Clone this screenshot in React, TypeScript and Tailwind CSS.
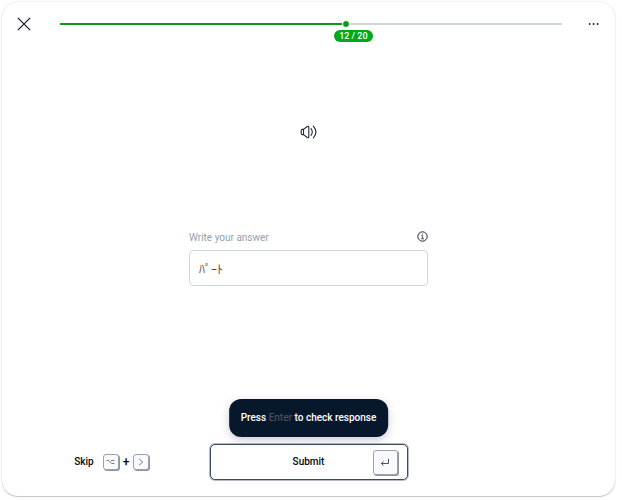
import React, { useState } from "react";

const progress = { current: 12, total: 20, percent: 57 };

function CloseIcon() {
    return (
        <svg viewBox="0 0 14 14" className="w-[14px] h-[14px]" fill="none" stroke="#111827" strokeWidth="1.2">
            <path d="M0.8 0.8 L13.2 13.2 M13.2 0.8 L0.8 13.2" />
        </svg>
    );
}

function MoreIcon() {
    return (
        <svg viewBox="0 0 12 4" className="w-[12px] h-[4px]" fill="#1f2937">
            <circle cx="1.6" cy="2" r="1" />
            <circle cx="5.6" cy="2" r="1" />
            <circle cx="9.6" cy="2" r="1" />
        </svg>
    );
}

function SpeakerIcon() {
    return (
        <svg viewBox="0 0 18 14" className="w-[18px] h-[14px]" fill="none" stroke="#1f2937" strokeWidth="1.1" strokeLinejoin="round" strokeLinecap="round">
            <path d="M3.5 4.4 H2.3 Q1.2 4.4 1.2 5.5 V8.5 Q1.2 9.6 2.3 9.6 H3.5 Z" />
            <path d="M3.5 4.4 L7.3 1.5 Q8.8 0.7 8.8 2.3 V11.7 Q8.8 13.3 7.3 12.5 L3.5 9.6" />
            <path d="M11 3.6 Q13.6 7 11 10.4" />
            <path d="M13.3 1.2 Q18.6 7 13.3 12.8" />
        </svg>
    );
}

function InfoIcon() {
    return (
        <svg viewBox="0 0 11 11" className="w-[11px] h-[11px]" fill="none" stroke="#1f2937" strokeWidth="1">
            <circle cx="5.5" cy="5.5" r="4.7" />
            <path d="M4.3 4.7 H5.6 V7.8 M4.2 7.8 H7" strokeWidth="0.8" />
            <circle cx="5.5" cy="3" r="0.5" fill="#1f2937" stroke="none" />
        </svg>
    );
}

function Key({ children }: { children: React.ReactNode }) {
    return (
        <kbd className="flex items-center justify-center w-4 h-4 rounded-[3px] border border-gray-400 bg-gray-50 shadow-[1px_1px_0_#8d96a5]">
            {children}
        </kbd>
    );
}

export default function App() {
    const [answer, setAnswer] = useState("ﾊﾟｰﾄ");

    return (
        <div className="min-h-screen flex bg-white pt-[2px] pl-[2px] pr-[7px] pb-[4px] font-['Roboto','Noto_Sans_CJK_JP',sans-serif] text-[10px] leading-4 text-gray-950">
            <div className="flex-1 flex flex-col rounded-2xl bg-white shadow-[0_0_2px_rgba(15,23,42,0.18),0_1px_1px_rgba(15,23,42,0.2)]">
                <header className="flex items-center px-[15px] pt-[15px]">
                    <button type="button" aria-label="Close">
                        <CloseIcon />
                    </button>
                    <div
                        role="progressbar"
                        aria-label="Progress"
                        aria-valuenow={progress.current}
                        aria-valuemax={progress.total}
                        className="relative flex-1 h-[2px] ml-[29px] mr-[26px] bg-gray-300"
                    >
                        <div className="h-full bg-[#089c1b]" style={{ width: `${progress.percent}%` }} />
                        <div className="absolute top-1/2 -translate-x-1/2 -translate-y-1/2" style={{ left: `${progress.percent}%` }}>
                            <div className="w-2 h-2 rounded-full border border-white bg-[#089c1b]" />
                        </div>
                        <span
                            className="absolute top-[7px] -ml-3 px-[5px] rounded-full bg-[#00a81c] text-white text-[9px] font-medium leading-3 whitespace-nowrap"
                            style={{ left: `${progress.percent}%` }}
                        >
                            {progress.current} / {progress.total}
                        </span>
                    </div>
                    <button type="button" aria-label="More options">
                        <MoreIcon />
                    </button>
                </header>

                <main className="flex-1 flex flex-col items-center pt-[94px]">
                    <button type="button" aria-label="Play audio">
                        <SpeakerIcon />
                    </button>
                    <form className="w-[239px] mt-[91px]" onSubmit={(e) => e.preventDefault()} id="answer-form">
                        <div className="flex items-start justify-between mb-1">
                            <label htmlFor="answer" className="text-[#93a1ad]">
                                Write your answer
                            </label>
                            <button type="button" aria-label="Info" className="pt-px">
                                <InfoIcon />
                            </button>
                        </div>
                        <input
                            id="answer"
                            type="text"
                            value={answer}
                            onChange={(e) => setAnswer(e.target.value)}
                            className="w-full h-9 px-[9px] rounded border border-gray-300 text-[12px] text-[#5a4438] outline-none"
                        />
                    </form>
                </main>

                <footer className="grid grid-cols-[1fr_198px_1fr] items-center pb-4">
                    <button type="button" className="flex items-center justify-center pl-3 font-medium">
                        <span className="mr-[9px]">Skip</span>
                        <Key>
                            <svg viewBox="0 0 9 7" className="w-[9px] h-[7px]" fill="none" stroke="#6b7280" strokeWidth="0.9">
                                <path d="M0.5 1.5 H3 L5.5 4.5 H8.5 M5 1.5 H8.5" />
                            </svg>
                        </Key>
                        <span className="mx-1 text-xs">+</span>
                        <Key>
                            <svg viewBox="0 0 6 8" className="w-[6px] h-[8px]" fill="none" stroke="#6b7280" strokeWidth="0.9">
                                <path d="M1 0.8 L4.8 4 L1 7.2" />
                            </svg>
                        </Key>
                    </button>
                    <div className="relative">
                        <div role="tooltip" className="absolute bottom-full left-1/2 -translate-x-1/2 mb-[7px] px-3 py-[11px] rounded-xl bg-[#07182d] text-white font-medium whitespace-nowrap shadow-[0_3px_8px_rgba(60,40,90,0.25)]">
                            Press <span className="text-[#484e57]">Enter</span> to check response
                        </div>
                        <button
                            type="submit"
                            form="answer-form"
                            className="flex items-center w-full h-9 pl-[34px] pr-[9px] rounded-[5px] border border-[#3d4a5e] bg-white font-medium shadow-[0_0_0_1px_#b4bbc8]"
                        >
                            <span className="flex-1 text-center">Submit</span>
                            <kbd className="flex items-center justify-center w-[25px] h-[25px] rounded-[3px] border border-gray-400 bg-gray-50 shadow-[1px_1px_0_#8d96a5]">
                                <svg viewBox="0 0 10 9" className="w-[10px] h-[9px]" fill="none" stroke="#374151" strokeWidth="0.9">
                                    <path d="M8.5 0.8 V5.5 H1.5 M3.5 3.5 L1.4 5.5 L3.5 7.5" />
                                </svg>
                            </kbd>
                        </button>
                    </div>
                </footer>
            </div>
        </div>
    );
}
